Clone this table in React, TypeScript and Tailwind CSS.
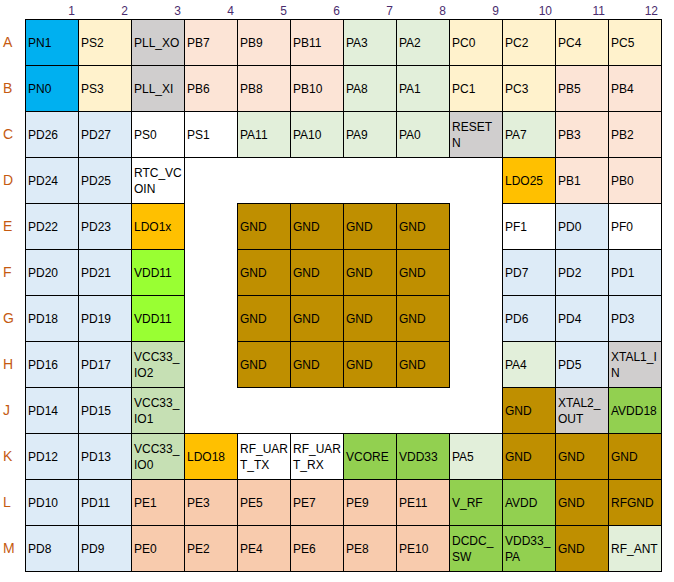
import React from 'react';

type Pin = { name: string; bg: string };

const cols = ['1', '2', '3', '4', '5', '6', '7', '8', '9', '10', '11', '12'];
const rows = ['A', 'B', 'C', 'D', 'E', 'F', 'G', 'H', 'J', 'K', 'L', 'M'];

const blue = 'bg-[#00B0F0]';
const yel = 'bg-[#FFF2CC]';
const gray = 'bg-[#D0CECE]';
const peach = 'bg-[#FCE4D6]';
const lgreen = 'bg-[#E2EFDA]';
const lblue = 'bg-[#DDEBF7]';
const white = 'bg-white';
const orange = 'bg-[#FFC000]';
const lime = 'bg-[#99FF33]';
const sage = 'bg-[#C6E0B4]';
const gnd = 'bg-[#BF8F00]';
const green = 'bg-[#92D050]';
const pe = 'bg-[#F8CBAD]';

// "|" marks where the cell text wraps
const pins: Pin[] = [
  // A
  { name: 'PN1', bg: blue }, { name: 'PS2', bg: yel }, { name: 'PLL_XO', bg: gray }, { name: 'PB7', bg: peach },
  { name: 'PB9', bg: peach }, { name: 'PB11', bg: peach }, { name: 'PA3', bg: lgreen }, { name: 'PA2', bg: lgreen },
  { name: 'PC0', bg: yel }, { name: 'PC2', bg: yel }, { name: 'PC4', bg: yel }, { name: 'PC5', bg: yel },
  // B
  { name: 'PN0', bg: blue }, { name: 'PS3', bg: yel }, { name: 'PLL_XI', bg: gray }, { name: 'PB6', bg: peach },
  { name: 'PB8', bg: peach }, { name: 'PB10', bg: peach }, { name: 'PA8', bg: lgreen }, { name: 'PA1', bg: lgreen },
  { name: 'PC1', bg: yel }, { name: 'PC3', bg: yel }, { name: 'PB5', bg: peach }, { name: 'PB4', bg: peach },
  // C
  { name: 'PD26', bg: lblue }, { name: 'PD27', bg: lblue }, { name: 'PS0', bg: white }, { name: 'PS1', bg: white },
  { name: 'PA11', bg: lgreen }, { name: 'PA10', bg: lgreen }, { name: 'PA9', bg: lgreen }, { name: 'PA0', bg: lgreen },
  { name: 'RESET|N', bg: gray }, { name: 'PA7', bg: lgreen }, { name: 'PB3', bg: peach }, { name: 'PB2', bg: peach },
  // D
  { name: 'PD24', bg: lblue }, { name: 'PD25', bg: lblue }, { name: 'RTC_VC|OIN', bg: white },
  { name: 'LDO25', bg: orange }, { name: 'PB1', bg: peach }, { name: 'PB0', bg: peach },
  // E
  { name: 'PD22', bg: lblue }, { name: 'PD23', bg: lblue }, { name: 'LDO1x', bg: orange },
  { name: 'PF1', bg: white }, { name: 'PD0', bg: lblue }, { name: 'PF0', bg: white },
  // F
  { name: 'PD20', bg: lblue }, { name: 'PD21', bg: lblue }, { name: 'VDD11', bg: lime },
  { name: 'PD7', bg: lblue }, { name: 'PD2', bg: lblue }, { name: 'PD1', bg: lblue },
  // G
  { name: 'PD18', bg: lblue }, { name: 'PD19', bg: lblue }, { name: 'VDD11', bg: lime },
  { name: 'PD6', bg: lblue }, { name: 'PD4', bg: lblue }, { name: 'PD3', bg: lblue },
  // H
  { name: 'PD16', bg: lblue }, { name: 'PD17', bg: lblue }, { name: 'VCC33_|IO2', bg: sage },
  { name: 'PA4', bg: lgreen }, { name: 'PD5', bg: lblue }, { name: 'XTAL1_I|N', bg: gray },
  // J
  { name: 'PD14', bg: lblue }, { name: 'PD15', bg: lblue }, { name: 'VCC33_|IO1', bg: sage },
  { name: 'GND', bg: gnd }, { name: 'XTAL2_|OUT', bg: gray }, { name: 'AVDD18', bg: green },
  // K
  { name: 'PD12', bg: lblue }, { name: 'PD13', bg: lblue }, { name: 'VCC33_|IO0', bg: sage }, { name: 'LDO18', bg: orange },
  { name: 'RF_UAR|T_TX', bg: white }, { name: 'RF_UAR|T_RX', bg: white }, { name: 'VCORE', bg: green }, { name: 'VDD33', bg: green },
  { name: 'PA5', bg: lgreen }, { name: 'GND', bg: gnd }, { name: 'GND', bg: gnd }, { name: 'GND', bg: gnd },
  // L
  { name: 'PD10', bg: lblue }, { name: 'PD11', bg: lblue }, { name: 'PE1', bg: pe }, { name: 'PE3', bg: pe },
  { name: 'PE5', bg: pe }, { name: 'PE7', bg: pe }, { name: 'PE9', bg: pe }, { name: 'PE11', bg: pe },
  { name: 'V_RF', bg: green }, { name: 'AVDD', bg: green }, { name: 'GND', bg: gnd }, { name: 'RFGND', bg: gnd },
  // M
  { name: 'PD8', bg: lblue }, { name: 'PD9', bg: lblue }, { name: 'PE0', bg: pe }, { name: 'PE2', bg: pe },
  { name: 'PE4', bg: pe }, { name: 'PE6', bg: pe }, { name: 'PE8', bg: pe }, { name: 'PE10', bg: pe },
  { name: 'DCDC_|SW', bg: green }, { name: 'VDD33_|PA', bg: green }, { name: 'GND', bg: gnd }, { name: 'RF_ANT', bg: lgreen },
];

function Cell({ pin }: { pin: Pin }) {
  const lines = pin.name.split('|');
  return (
    <div className={`${pin.bg} flex flex-col justify-center pl-[2px] text-[12px] leading-[16px] whitespace-nowrap overflow-hidden text-black`}>
      {lines.map((l, i) => (
        <span key={i}>{l}</span>
      ))}
    </div>
  );
}

export default function App() {
  return (
    <div className="w-[674px] h-[582px] bg-white" style={{ fontFamily: '"Liberation Sans", Arial, sans-serif' }}>
      {/* column numbers */}
      <div className="flex gap-px pl-[26px] h-[19px] pt-[4px]">
        {cols.map((c) => (
          <div key={c} className="w-[52px] text-right pr-[3px] text-[12px] leading-[14px] text-[#4a2c6e]">
            {c}
          </div>
        ))}
      </div>

      <div className="flex">
        {/* row letters */}
        <div className="w-[25px] flex flex-col gap-px pt-px">
          {rows.map((r) => (
            <div key={r} className="h-[45px] flex items-center pl-[3px] text-[14px] text-[#C55A11]">
              {r}
            </div>
          ))}
        </div>

        <div className="grid grid-cols-[repeat(12,52px)] grid-rows-[repeat(12,45px)] gap-px p-px bg-black">
          {/* empty centre with the ground pad block */}
          <div className="col-start-4 col-span-6 row-start-4 row-span-6 bg-white grid grid-cols-[repeat(6,52px)] grid-rows-[repeat(6,45px)] gap-px">
            <div className="col-start-2 col-span-4 row-start-2 row-span-4 -m-px p-px bg-black grid grid-cols-4 grid-rows-4 gap-px">
              {Array.from({ length: 16 }).map((_, i) => (
                <Cell key={i} pin={{ name: 'GND', bg: gnd }} />
              ))}
            </div>
          </div>

          {pins.map((p, i) => (
            <Cell key={i} pin={p} />
          ))}
        </div>
      </div>
    </div>
  );
}
